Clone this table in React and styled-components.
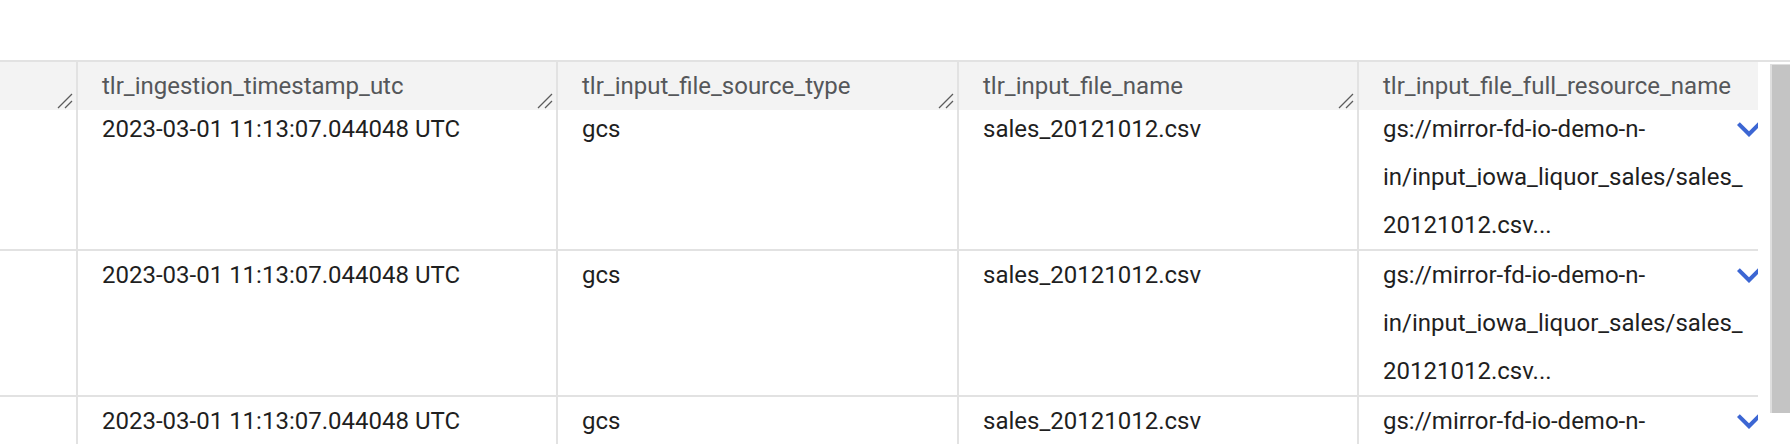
import styled, { createGlobalStyle } from "styled-components"

const GlobalStyle = createGlobalStyle`
  body {
    margin: 0;
    background: #fff;
    font-family: Roboto, "Liberation Sans", Arial, sans-serif;
  }
`

const GRID = "78px 480px 401px 400px 399px"

const columns = [
  { key: "num", title: "" },
  { key: "ts", title: "tlr_ingestion_timestamp_utc" },
  { key: "type", title: "tlr_input_file_source_type" },
  { key: "name", title: "tlr_input_file_name" },
  { key: "full", title: "tlr_input_file_full_resource_name" }
]

const row = {
  num: [],
  ts: ["2023-03-01 11:13:07.044048 UTC"],
  type: ["gcs"],
  name: ["sales_20121012.csv"],
  full: [
    "gs://mirror-fd-io-demo-n-",
    "in/input_iowa_liquor_sales/sales_",
    "20121012.csv..."
  ]
}

const rows = [row, row, row]

const Page = styled.div`
  padding-top: 60px;
`

const Frame = styled.div`
  display: flex;
  height: 382px;
  border-top: 2px solid #e2e2e2;
  overflow: hidden;
`

const TableArea = styled.div`
  width: 1758px;
  display: flex;
  flex-direction: column;
`

const HeaderRow = styled.div`
  display: grid;
  grid-template-columns: ${GRID};
  height: 48px;
  background: #f3f3f3;
`

const HeaderCell = styled.div`
  position: relative;
  padding: 0 24px;
  border-right: ${props => props.$last ? "none" : "2px solid #e2e2e2"};
  font-size: 24px;
  line-height: 48px;
  color: #55575a;
  white-space: nowrap;
  overflow: hidden;
`

const Grip = styled.svg`
  position: absolute;
  right: 3px;
  bottom: 1px;
  width: 16px;
  height: 16px;
`

const Body = styled.div`
  flex: 1;
  overflow: hidden;
`

const BodyInner = styled.div`
  margin-top: -5px;
`

const Row = styled.div`
  display: grid;
  grid-template-columns: ${GRID};
  border-bottom: 2px solid #e2e2e2;
`

const Cell = styled.div`
  position: relative;
  height: 144px;
  padding: 0 24px;
  border-right: ${props => props.$last ? "none" : "2px solid #e2e2e2"};
  font-size: 24px;
  line-height: 48px;
  color: #1f1f1f;
  overflow: hidden;
`

const Line = styled.span`
  display: block;
  white-space: nowrap;
`

const ExpandIcon = styled.svg`
  position: absolute;
  top: 0;
  right: -15px;
  width: 48px;
  height: 48px;
  fill: #3c66d3;
`

const ScrollTrack = styled.div`
  flex: 1;
  padding: 2px 0 0 12px;
`

const ScrollThumb = styled.div`
  height: 348px;
  background: #c4c4c4;
  border-left: 2px solid #dedede;
  border-top: 1px solid #dedede;
`

function ResizeGrip () {
  return (
    <Grip viewBox="0 0 16 16">
      <path d="M15 1L1 15M15 8L8 15" stroke="#5b5b5b" strokeWidth="1.3" fill="none" />
    </Grip>
  )
}

function App () {
  return (
    <Page>
      <GlobalStyle />
      <Frame>
        <TableArea>
          <HeaderRow>
            {columns.map((col, i) => {
              const last = i === columns.length - 1
              return (
                <HeaderCell key={col.key} $last={last}>
                  {col.title}
                  {!last && <ResizeGrip />}
                </HeaderCell>
              )
            })}
          </HeaderRow>
          <Body>
            <BodyInner>
              {rows.map((r, ri) => (
                <Row key={ri}>
                  {columns.map((col, i) => {
                    const last = i === columns.length - 1
                    return (
                      <Cell key={col.key} $last={last}>
                        {r[col.key].map((text, li) => <Line key={li}>{text}</Line>)}
                        {last && (
                          <ExpandIcon viewBox="0 0 24 24">
                            <path d="M16.59 8.59L12 13.17 7.41 8.59 6 10l6 6 6-6z" />
                          </ExpandIcon>
                        )}
                      </Cell>
                    )
                  })}
                </Row>
              ))}
            </BodyInner>
          </Body>
        </TableArea>
        <ScrollTrack>
          <ScrollThumb />
        </ScrollTrack>
      </Frame>
    </Page>
  )
}

export default App
